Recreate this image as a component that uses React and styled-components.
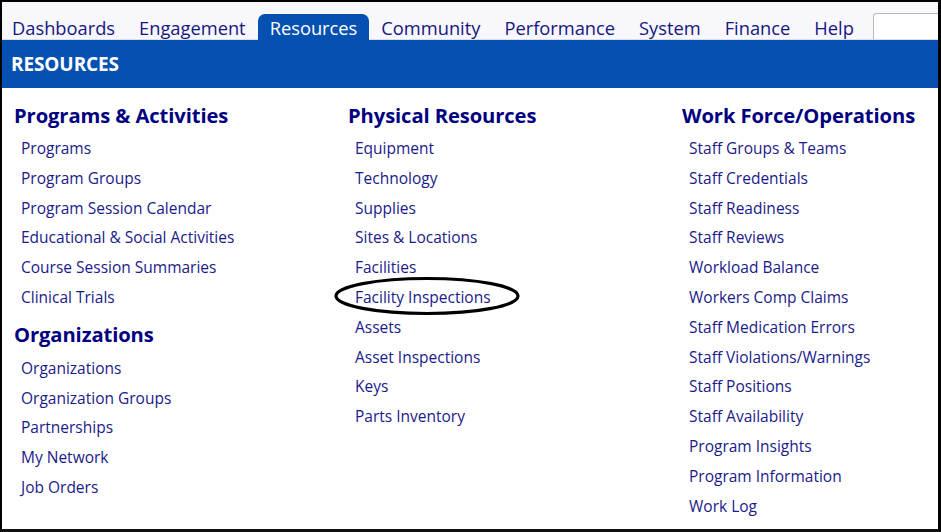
import React from 'react';
import styled, { createGlobalStyle } from 'styled-components';

const GlobalStyle = createGlobalStyle`
  html, body {
    margin: 0;
    padding: 0;
    background: #fff;
  }
  body {
    font-family: "Open Sans", "Noto Sans", Arial, sans-serif;
  }
`;

const Frame = styled.div`
  width: 941px;
  height: 532px;
  box-sizing: border-box;
  border: 2px solid #000;
  border-right-width: 3px;
  border-bottom: 3px solid #111;
  overflow: hidden;
  background: #fff;
`;

const TabBar = styled.div`
  height: 38px;
  box-sizing: border-box;
  display: flex;
  align-items: flex-end;
  background: #f7f7fc;
  border-bottom: 1px solid #dcdce4;
`;

const Tab = styled.div`
  height: 26px;
  padding: 1px 12px 0;
  box-sizing: border-box;
  display: flex;
  align-items: center;
  font-size: 18.3px;
  color: ${p => (p.active ? '#fff' : '#16167f')};
  background: ${p => (p.active ? '#0550b1' : 'transparent')};
  border-radius: ${p => (p.active ? '7px 7px 0 0' : '0')};
  margin-bottom: -1px;
  white-space: nowrap;

  &:first-child {
    padding-left: 10px;
  }
`;

const Search = styled.div`
  margin-left: auto;
  width: 64px;
  height: 25px;
  background: #fff;
  border: 1px solid #b8b8b8;
  border-right: none;
  border-bottom: none;
  border-radius: 4px 0 0 0;
`;

const Banner = styled.div`
  height: 48px;
  background: #0550b1;
  color: #fff;
  font-weight: 700;
  font-size: 19px;
  letter-spacing: -0.1px;
  display: flex;
  align-items: center;
  padding-left: 9px;
`;

const Columns = styled.div`
  display: grid;
  grid-template-columns: 334px 334px 1fr;
  padding: 12px 0 0 12px;
`;

const Column = styled.div`
  display: flex;
  flex-direction: column;
`;

const Heading = styled.div`
  font-size: 20.2px;
  font-weight: 700;
  color: #000080;
  letter-spacing: -0.1px;
  line-height: 30px;
  margin-top: ${p => (p.first ? '0' : '6px')};
  margin-bottom: ${p => (p.first ? '4px' : '5px')};
`;

const Item = styled.div`
  font-size: 15.5px;
  color: #1a1a8a;
  line-height: 29.8px;
  padding-left: 7px;
  white-space: nowrap;
`;

const Circled = styled.span`
  position: relative;
  display: inline-block;
`;

const Ellipse = styled.svg`
  position: absolute;
  left: -21px;
  top: -7px;
  pointer-events: none;
`;

const tabs = ['Dashboards', 'Engagement', 'Resources', 'Community', 'Performance', 'System', 'Finance', 'Help'];

const columns = [
  [
    {
      title: 'Programs & Activities',
      items: [
        'Programs',
        'Program Groups',
        'Program Session Calendar',
        'Educational & Social Activities',
        'Course Session Summaries',
        'Clinical Trials',
      ],
    },
    {
      title: 'Organizations',
      items: ['Organizations', 'Organization Groups', 'Partnerships', 'My Network', 'Job Orders'],
    },
  ],
  [
    {
      title: 'Physical Resources',
      items: [
        'Equipment',
        'Technology',
        'Supplies',
        'Sites & Locations',
        'Facilities',
        'Facility Inspections',
        'Assets',
        'Asset Inspections',
        'Keys',
        'Parts Inventory',
      ],
    },
  ],
  [
    {
      title: 'Work Force/Operations',
      items: [
        'Staff Groups & Teams',
        'Staff Credentials',
        'Staff Readiness',
        'Staff Reviews',
        'Workload Balance',
        'Workers Comp Claims',
        'Staff Medication Errors',
        'Staff Violations/Warnings',
        'Staff Positions',
        'Staff Availability',
        'Program Insights',
        'Program Information',
        'Work Log',
      ],
    },
  ],
];

// hand-drawn style ring around a highlighted link
const Marked = ({ children }) => (
  <Circled>
    {children}
    <Ellipse width="186" height="40" viewBox="0 0 186 40">
      <ellipse cx="93" cy="20" rx="91" ry="17.5" fill="none" stroke="#000" strokeWidth="3.2" />
    </Ellipse>
  </Circled>
);

export default function App() {
  return (
    <>
      <GlobalStyle />
      <Frame>
        <TabBar>
          {tabs.map(t => (
            <Tab key={t} active={t === 'Resources'}>
              {t}
            </Tab>
          ))}
          <Search />
        </TabBar>
        <Banner>RESOURCES</Banner>
        <Columns>
          {columns.map((groups, ci) => (
            <Column key={ci}>
              {groups.map((g, gi) => (
                <React.Fragment key={g.title}>
                  <Heading first={gi === 0}>{g.title}</Heading>
                  {g.items.map(item => (
                    <Item key={item}>
                      {item === 'Facility Inspections' ? <Marked>{item}</Marked> : item}
                    </Item>
                  ))}
                </React.Fragment>
              ))}
            </Column>
          ))}
        </Columns>
      </Frame>
    </>
  );
}
